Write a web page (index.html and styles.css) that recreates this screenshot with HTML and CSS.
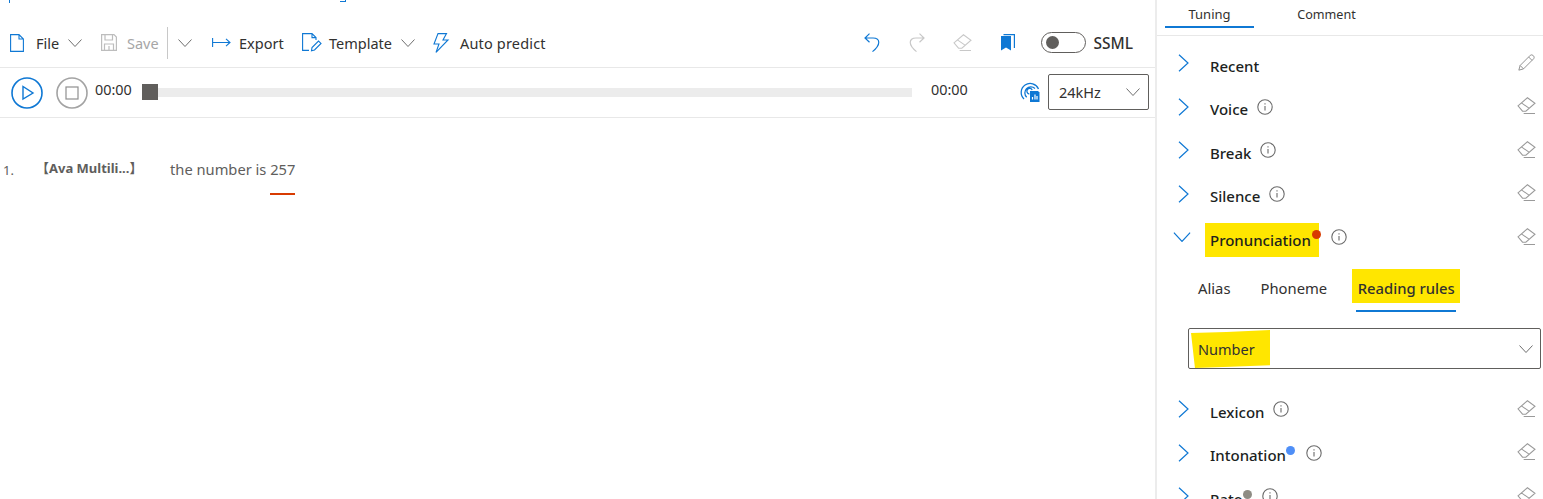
FILE: index.html
```html
<!DOCTYPE html>
<html lang="en">
<head>
<meta charset="utf-8">
<title>Tuning</title>
<link rel="stylesheet" href="styles.css">
</head>
<body>
<svg class="defs" width="0" height="0" aria-hidden="true">
  <symbol id="chev" viewBox="0 0 14 8"><path d="M.5.5 7 7.5 13.5.5" fill="none" stroke="currentColor"/></symbol>
  <symbol id="right" viewBox="0 0 11 18"><path d="M1 .7 10 9 1 17.3" fill="none" stroke="currentColor" stroke-width="1.2"/></symbol>
  <symbol id="eraser" viewBox="0 0 20 18"><path d="M1 9.3 11 .8 19 6.6 9.3 15H5.8ZM4.6 6.2 13 12M7 17.4H19" fill="none" stroke="currentColor" stroke-width="1.1"/></symbol>
  <symbol id="info" viewBox="0 0 16 16"><circle cx="8" cy="8" r="7.2" fill="none" stroke="#6b6b6b" stroke-width="1.1"/><path d="M8 7v4.6M8 4.2v1.3" stroke="#6b6b6b" stroke-width="1.1"/></symbol>
</svg>
<div class="app">
  <main class="main">
    <div class="strip"><i class="tick"></i><i class="tail"></i></div>
    <div class="toolbar">
      <div class="tb tb-file">
        <svg class="ic ic-file" viewBox="0 0 14 18"><path d="M.6.6H9L13.4 5V17.4H.6ZM9 .6V5H13.4" fill="none" stroke="#0f78d4" stroke-width="1.1"/></svg>
        <span>File</span>
        <svg class="chev" viewBox="0 0 14 8"><use href="#chev"/></svg>
      </div>
      <div class="tb tb-save muted">
        <svg class="ic ic-save" viewBox="0 0 16 17"><path d="M.6.6H13L15.4 3V16.4H.6ZM4 .6V6H11.5V.6M3.5 16.4V10H12.5V16.4M8 12V16" fill="none" stroke="#bdbdbd" stroke-width="1.2"/></svg>
        <span>Save</span>
      </div>
      <i class="sep"></i>
      <svg class="chev chev-solo" viewBox="0 0 14 8"><use href="#chev"/></svg>
      <div class="tb tb-export">
        <svg class="ic ic-export" viewBox="0 0 19 10"><path d="M.6 0V9M1 4.5H18M14 .8 18 4.5 14 8.2" fill="none" stroke="#0f78d4" stroke-width="1.1"/></svg>
        <span>Export</span>
      </div>
      <div class="tb tb-template">
        <svg class="ic ic-tpl" viewBox="0 0 20 19"><path d="M7 17.4H.6V.6H10L14 4.6V7M10 .6V4.6H14M9.5 17.8 10 14.5 16.5 8 19 10.4 12.5 17Z" fill="none" stroke="#0f78d4" stroke-width="1.1"/></svg>
        <span>Template</span>
        <svg class="chev" viewBox="0 0 14 8"><use href="#chev"/></svg>
      </div>
      <div class="tb tb-auto">
        <svg class="ic ic-bolt" viewBox="0 0 16 20"><path d="M5 .6H13.5L10 7H15L3 19.4 6 11H1Z" fill="none" stroke="#0f78d4" stroke-width="1.1"/></svg>
        <span>Auto predict</span>
      </div>
      <div class="tb-right">
        <svg class="ic ic-undo" viewBox="0 0 16 19"><path d="M5.5.6 1 5 5.5 9.2M1 5H9C16.5 5 17 12 8.5 18.6" fill="none" stroke="#0f78d4" stroke-width="1.2"/></svg>
        <svg class="ic ic-redo" viewBox="0 0 16 19"><path d="M10.5.6 15 5 10.5 9.2M15 5H7C-.5 5-1 12 7.5 18.6" fill="none" stroke="#c8c8c8" stroke-width="1.2"/></svg>
        <svg class="ic ic-erase-top" viewBox="0 0 20 18"><use href="#eraser"/></svg>
        <svg class="ic ic-book" viewBox="0 0 14 17"><path d="M0 2H10V16.5L5 13.5 0 16.5Z" fill="#0f78d4"/><path d="M2.5.6H13.4V14" fill="none" stroke="#0f78d4" stroke-width="1.2"/></svg>
        <div class="toggle"><i class="knob"></i></div>
        <span class="ssml">SSML</span>
      </div>
    </div>
    <div class="player">
      <svg class="ic ic-round" viewBox="0 0 32 32"><circle cx="16" cy="16" r="15" fill="none" stroke="#0f78d4" stroke-width="1.6"/><path d="M12 9.5V22L22 16Z" fill="none" stroke="#0f78d4" stroke-width="1.4"/></svg>
      <svg class="ic ic-round ic-stop" viewBox="0 0 32 32"><circle cx="16" cy="16" r="15" fill="none" stroke="#a3a3a3" stroke-width="1.6"/><rect x="10" y="10" width="12" height="12" fill="none" stroke="#8f8f8f" stroke-width="1.2"/></svg>
      <span class="time time-a">00:00</span>
      <div class="track"><i class="thumb"></i></div>
      <span class="time time-b">00:00</span>
      <svg class="ic ic-wave" viewBox="0 0 20 20"><path d="M4 17A9 9 0 1 1 18.5 7M6.7 15.2A6 6 0 1 1 15 6.5M9.3 12A2.8 2.8 0 1 1 12.2 8" fill="none" stroke="#0f78d4" stroke-width="1.3"/><path d="M10 9H18L19.5 10.5V20H10Z" fill="#0f78d4"/><path d="M12.5 17.5V15M15 17.5V12.5M17 17.5V14" stroke="#fff" stroke-width="1.2"/></svg>
      <div class="rate"><span>24kHz</span><svg class="chev" viewBox="0 0 14 8"><use href="#chev"/></svg></div>
    </div>
    <div class="doc">
      <span class="num">1.</span>
      <span class="speaker">【Ava Multili...】</span>
      <span class="line">the number is <span class="flag">257</span></span>
    </div>
  </main>
  <aside class="side">
    <div class="tabs">
      <div class="tab tab-on">Tuning</div>
      <div class="tab tab-off">Comment</div>
    </div>
    <div class="rows">
      <div class="row"><svg class="arrow" viewBox="0 0 11 18"><use href="#right"/></svg><span class="lab">Recent</span><svg class="act" viewBox="0 0 20 20"><path d="M1 19 2.5 13.5 14.5 1.5Q16 .5 17.5 1.5L18.5 2.5Q19.5 4 18.5 5.5L6.5 17.5ZM2.5 13.5 6.5 17.5M12.5 3.5 16.5 7.5" fill="none" stroke="#8a8a8a" stroke-width="1.1"/></svg></div>
      <div class="row"><svg class="arrow" viewBox="0 0 11 18"><use href="#right"/></svg><span class="lab">Voice</span><svg class="inf" viewBox="0 0 16 16"><use href="#info"/></svg><svg class="act" viewBox="0 0 20 18"><use href="#eraser"/></svg></div>
      <div class="row"><svg class="arrow" viewBox="0 0 11 18"><use href="#right"/></svg><span class="lab">Break</span><svg class="inf" viewBox="0 0 16 16"><use href="#info"/></svg><svg class="act" viewBox="0 0 20 18"><use href="#eraser"/></svg></div>
      <div class="row"><svg class="arrow" viewBox="0 0 11 18"><use href="#right"/></svg><span class="lab">Silence</span><svg class="inf" viewBox="0 0 16 16"><use href="#info"/></svg><svg class="act" viewBox="0 0 20 18"><use href="#eraser"/></svg></div>
      <div class="row">
        <svg class="arrow-down" viewBox="0 0 14 8"><use href="#chev"/></svg>
        <span class="lab lab-hi">Pronunciation<i class="dot dot-red"></i></span>
        <svg class="inf" viewBox="0 0 16 16"><use href="#info"/></svg>
        <svg class="act" viewBox="0 0 20 18"><use href="#eraser"/></svg>
      </div>
      <div class="subtabs">
        <span class="sub">Alias</span>
        <span class="sub sub-ph">Phoneme</span>
        <span class="sub sub-on"><span class="hi">Reading rules</span></span>
      </div>
      <div class="select"><i class="marker"></i><span class="select-t">Number</span><svg class="chev" viewBox="0 0 14 8"><use href="#chev"/></svg></div>
      <div class="row"><svg class="arrow" viewBox="0 0 11 18"><use href="#right"/></svg><span class="lab">Lexicon</span><svg class="inf" viewBox="0 0 16 16"><use href="#info"/></svg><svg class="act" viewBox="0 0 20 18"><use href="#eraser"/></svg></div>
      <div class="row"><svg class="arrow" viewBox="0 0 11 18"><use href="#right"/></svg><span class="lab lab-dot">Intonation<i class="dot dot-blue"></i></span><svg class="inf" viewBox="0 0 16 16"><use href="#info"/></svg><svg class="act" viewBox="0 0 20 18"><use href="#eraser"/></svg></div>
      <div class="row"><svg class="arrow" viewBox="0 0 11 18"><use href="#right"/></svg><span class="lab lab-dot">Rate<i class="dot dot-gray"></i></span><svg class="inf" viewBox="0 0 16 16"><use href="#info"/></svg><svg class="act" viewBox="0 0 20 18"><use href="#eraser"/></svg></div>
    </div>
  </aside>
</div>
</body>
</html>
```

FILE: styles.css
```css
* { box-sizing: border-box; }
html, body { margin: 0; height: 499px; overflow: hidden; background: #fff; }
body { font-family: "Noto Sans", "Open Sans", sans-serif; font-size: 14.5px; color: #323130; }
.defs { position: absolute; }
svg { display: block; flex: none; overflow: visible; }
.app { display: flex; height: 499px; overflow: hidden; }
.main { width: 1155px; flex: none; }
.side { flex: 1; min-width: 0; border-left: 2px solid #ececec; }

.strip { height: 24px; position: relative; }
.tick { position: absolute; left: 9px; top: 0; width: 1px; height: 3px; background: #0f78d4; }
.tail { position: absolute; left: 340px; top: 0; width: 6px; height: 2px; border-bottom: 1px solid #0f78d4; border-right: 1px solid #0f78d4; }

.toolbar { height: 44px; display: flex; align-items: center; padding: 0 22px 6px 10px; border-bottom: 1px solid #e8e8e8; }
.tb { display: flex; align-items: center; }
.muted { color: #a6a6a6; }
.chev { width: 14px; height: 8px; color: #6e6e6e; }
.ic-file { width: 14px; height: 18px; margin-right: 12px; }
.tb-file .chev { margin-left: 9px; }
.tb-file { width: 91px; }
.ic-save { width: 16px; height: 17px; margin-right: 10px; }
.tb-save { width: 66px; }
.sep { width: 1px; height: 32px; background: #c8c8c8; }
.chev-solo { margin-left: 10px; width: 14px; }
.ic-export { width: 19px; height: 10px; margin-right: 8px; }
.tb-export { margin-left: 20px; width: 90px; }
.ic-tpl { width: 20px; height: 19px; margin-right: 7px; }
.tb-template { width: 131px; }
.tb-template .chev { margin-left: 9px; }
.ic-bolt { width: 16px; height: 20px; margin-right: 11px; }
.tb-auto span { letter-spacing: .17px; }
.tb-right { margin-left: auto; display: flex; align-items: center; }
.ic-undo, .ic-redo { width: 16px; height: 19px; }
.ic-redo { margin-left: 29px; }
.ic-erase-top { width: 19px; height: 17px; margin-left: 28px; color: #c8c8c8; }
.ic-book { width: 14px; height: 17px; margin-left: 29px; }
.toggle { width: 45px; height: 21px; margin-left: 26px; border: 1px solid #605e5c; border-radius: 11px; display: flex; align-items: center; padding-left: 4px; }
.knob { width: 13px; height: 13px; border-radius: 50%; background: #605e5c; }
.ssml { margin-left: 7px; font-weight: 500; font-size: 15.5px; }

.player { height: 50px; display: flex; align-items: center; padding: 0 6px 0 11px; border-bottom: 1px solid #e8e8e8; }
.ic-round { width: 32px; height: 32px; }
.ic-stop { margin-left: 13px; }
.time { font-size: 14.4px; width: 40px; position: relative; top: -3px; }
.time-a { margin-left: 7px; }
.track { width: 770px; height: 9px; background: #ececec; margin-left: 7px; position: relative; }
.thumb { position: absolute; left: 0; top: -4px; width: 16px; height: 16px; background: #605e5c; }
.time-b { margin-left: 19px; }
.ic-wave { width: 20px; height: 20px; margin: -2px 0 0 49px; }
.rate { width: 101px; height: 36px; margin: -2px 0 0 8px; border: 1px solid #605e5c; border-radius: 2px; display: flex; align-items: center; justify-content: space-between; padding: 0 8px 0 10px; }

.doc { display: flex; align-items: baseline; padding: 41px 0 0 3px; color: #605e5c; }
.num { font-size: 13px; width: 35px; }
.speaker { font-family: "Noto Sans", "Noto Sans CJK SC", sans-serif; font-size: 13px; font-weight: 700; width: 132px; margin-left: -2px; white-space: nowrap; position: relative; top: -2px; flex: none; }
.line { font-size: 14.7px; margin-left: 2px; }
.flag { display: inline-block; padding-bottom: 14px; border-bottom: 2px solid #d83b01; }

.tabs { height: 36px; display: flex; padding: 0 0 0 8px; border-bottom: 1px solid #e8e8e8; font-size: 13px; }
.tab { padding-top: 5px; width: 89px; text-align: center; }
.tab-off { margin-left: 42px; width: 86px; padding-right: 25px; font-size: 12.6px; padding-top: 6px; }
.tab-on { height: 28px; border-bottom: 2px solid #0f78d4; }

.rows { padding-top: 8px; }
.row { height: 43.5px; display: flex; align-items: center; padding: 0 7px 0 21px; }
.arrow { width: 11px; height: 18px; color: #0f78d4; margin: -5px 21px 0 0; }
.arrow-down { width: 18px; height: 10px; color: #0f78d4; margin: -5px 14px 0 -5px; }
.lab { font-weight: 500; color: #201f1e; font-size: 15px; line-height: 20px; position: relative; }
.lab-dot { margin-right: 11px; }
.lab-hi { background: #ffe600; padding: 7px 9px 7px 5px; width: 114px; white-space: nowrap; }
.dot { position: absolute; width: 9px; height: 9px; border-radius: 50%; right: -9px; top: 1px; }
.dot-red { background: #d83b01; right: -2px; top: 7px; }
.dot-blue { background: #4f8ff7; }
.dot-gray { background: #8e8c84; right: -10px; }
.inf { width: 16px; height: 16px; margin: -5px 0 0 9px; }
.lab-hi + .inf { margin-left: 12px; }
.act { width: 19px; height: 17px; margin: -7px 0 0 auto; color: #9a9a9a; }

.subtabs { height: 54px; display: flex; align-items: flex-start; padding: 7.5px 0 0 41px; font-size: 14.8px; }
.sub { line-height: 38px; height: 34px; }
.sub-ph { margin-left: 30px; }
.sub-on { margin-left: 25px; width: 108px; height: 43px; position: relative; }
.sub-on::after { content: ""; position: absolute; left: 4px; right: 4px; bottom: 0; height: 2px; background: #0f78d4; }
.hi { display: block; height: 34px; background: #ffe600; text-align: center; font-weight: 500; white-space: nowrap; }

.select { height: 41px; margin: 12.5px 2px 21px 31px; border: 1px solid #605e5c; border-radius: 2px; display: flex; align-items: center; justify-content: space-between; padding: 0 7px 0 9px; position: relative; }
.select-t { position: relative; }
.marker { position: absolute; left: 2px; top: 1px; width: 79px; height: 38px; background: #ffe600; clip-path: polygon(0 8%, 45% 5%, 100% 0, 100% 93%, 50% 97%, 5% 100%); }
```
